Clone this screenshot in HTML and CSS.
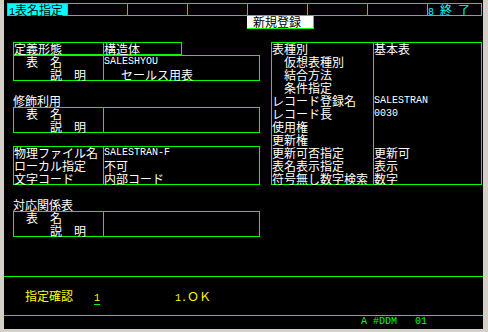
FILE: index.html
```html
<!DOCTYPE html>
<html lang="ja">
<head>
<meta charset="utf-8">
<title>表名指定</title>
<link rel="stylesheet" href="styles.css">
</head>
<body>
<div class="term">
  <div class="grid">
    <div class="topbar">
      <div class="tcell sel"><span class="h">1</span>表名指定</div>
      <div class="tcell"></div>
      <div class="tcell"></div>
      <div class="tcell"></div>
      <div class="tcell"></div>
      <div class="tcell"></div>
      <div class="tcell"></div>
      <div class="tcell last"><span class="h">8&nbsp;</span>終<span class="h">&nbsp;</span>了</div>
    </div>
    <div class="newreg">新規登録</div>

    <div class="box b-def">
      <div class="lbl">定義形態</div>
      <div class="val">構造体</div>
    </div>
    <div class="box b-name">
      <div class="lbl"><div>　表　名</div><div>　　　説　明</div></div>
      <div class="val"><div class="h">SALESHYOU</div><div class="ind3">セールス用表</div></div>
    </div>

    <div class="caption t-mod">修飾利用</div>
    <div class="box b-mod">
      <div class="lbl"><div>　表　名</div><div>　　　説　明</div></div>
      <div class="val"></div>
    </div>

    <div class="box b-phys">
      <div class="lbl"><div>物理ファイル名</div><div>ローカル指定</div><div>文字コード</div></div>
      <div class="val"><div class="h">SALESTRAN-F</div><div>不可</div><div>内部コード</div></div>
    </div>

    <div class="caption t-rel">対応関係表</div>
    <div class="box b-rel">
      <div class="lbl"><div>　表　名</div><div>　　　説　明</div></div>
      <div class="val"></div>
    </div>

    <div class="box panel">
      <div class="lbl">
        <div>表種別</div>
        <div>　仮想表種別</div>
        <div>　結合方法</div>
        <div>　条件指定</div>
        <div>レコード登録名</div>
        <div>レコード長</div>
        <div>使用権</div>
        <div>更新権</div>
        <div>更新可否指定</div>
        <div>表名表示指定</div>
        <div>符号無し数字検索</div>
      </div>
      <div class="val">
        <div>基本表</div>
        <div></div>
        <div></div>
        <div></div>
        <div class="h">SALESTRAN</div>
        <div class="h">0030</div>
        <div></div>
        <div></div>
        <div>更新可</div>
        <div>表示</div>
        <div>数字</div>
      </div>
    </div>

    <div class="rule rule-top"></div>
    <div class="prompt p-label">指定確認</div>
    <div class="prompt p-input"><span class="h">1</span></div>
    <div class="prompt p-opt"><span class="h">1.</span>ＯＫ</div>
    <div class="rule rule-bottom"></div>
    <div class="status h">A #DDM   01</div>
  </div>
</div>
</body>
</html>
```

FILE: styles.css
```css
* { box-sizing: border-box; }

html, body {
  margin: 0;
  padding: 0;
}

body {
  width: 488px;
  height: 332px;
  overflow: hidden;
  background: #d4d0c8;
}

.term {
  margin-left: 4px;
  width: 479px;
  height: 329px;
  background: #000;
  overflow: hidden;
}

.grid {
  display: grid;
  grid-template-columns: repeat(81, 6px);
  grid-template-rows: repeat(25, 13px);
  margin-left: -3px;
  padding-top: 3px;
  width: 486px;
  font-family: "Noto Sans CJK JP", sans-serif;
  font-size: 12px;
  line-height: 13px;
  color: #fff;
  white-space: nowrap;
}

.h {
  font-family: "Liberation Mono", monospace;
  font-size: 10px;
}

/* top function bar */
.topbar {
  grid-column: 2 / 81;
  grid-row: 1;
  display: flex;
  border: 1px solid #00ff00;
  margin-right: -1px;
}
.tcell {
  flex: 0 0 60px;
  border-right: 1px solid #00ff00;
  line-height: 11px;
}
.tcell.sel {
  background: #00ffff;
  color: #000;
  padding-left: 1px;
}
.tcell.last {
  flex: 1 1 auto;
  border-right: 0;
  color: #00ffff;
}

.newreg {
  grid-column: 42 / 53;
  grid-row: 2;
  background: #fff;
  color: #000;
  border: 1px solid #00ff00;
  border-top: 0;
  border-left: 0;
  margin-right: -1px;
  padding-left: 6px;
  line-height: 12px;
}

/* boxed fields */
.box {
  display: flex;
  border: 1px solid #00ff00;
  margin-right: -1px;
}
.box .lbl {
  flex: 0 0 90px;
  border-right: 1px solid #00ff00;
  margin-top: -1px;
}
.box .val {
  flex: 1 1 auto;
  margin-top: -1px;
}
.box .lbl > div,
.box .val > div {
  height: 13px;
}
.box .val > .ind3 {
  padding-left: 17px;
}
.panel .lbl {
  flex-basis: 102px;
}

.b-def  { grid-column: 3 / 31; grid-row: 4; }
.b-name { grid-column: 3 / 44; grid-row: 5 / 7; }
.b-mod  { grid-column: 3 / 44; grid-row: 9 / 11; }
.b-phys { grid-column: 3 / 44; grid-row: 12 / 15; }
.b-rel  { grid-column: 3 / 44; grid-row: 17 / 19; }
.panel  { grid-column: 46 / 81; grid-row: 4 / 15; }

.caption { grid-column: 3 / span 20; }
.t-mod { grid-row: 8; }
.t-rel { grid-row: 16; }

/* bottom prompt */
.rule {
  grid-column: 1 / -1;
  border-top: 1px solid #00ff00;
}
.rule-top { grid-row: 22; }
.rule-bottom { grid-row: 25; }

.prompt {
  grid-row: 23;
  color: #ffff00;
}
.p-label { grid-column: 5 / span 10; }
.p-input {
  grid-column: 16 / span 2;
  padding-left: 3px;
}
.p-input .h {
  display: inline-block;
  width: 6px;
  height: 13px;
  border-bottom: 1px solid #00ff00;
}
.p-opt { grid-column: 30 / span 10; }

.status {
  grid-row: 25;
  grid-column: 61 / span 15;
  color: #00ff00;
  white-space: pre;
}
```
